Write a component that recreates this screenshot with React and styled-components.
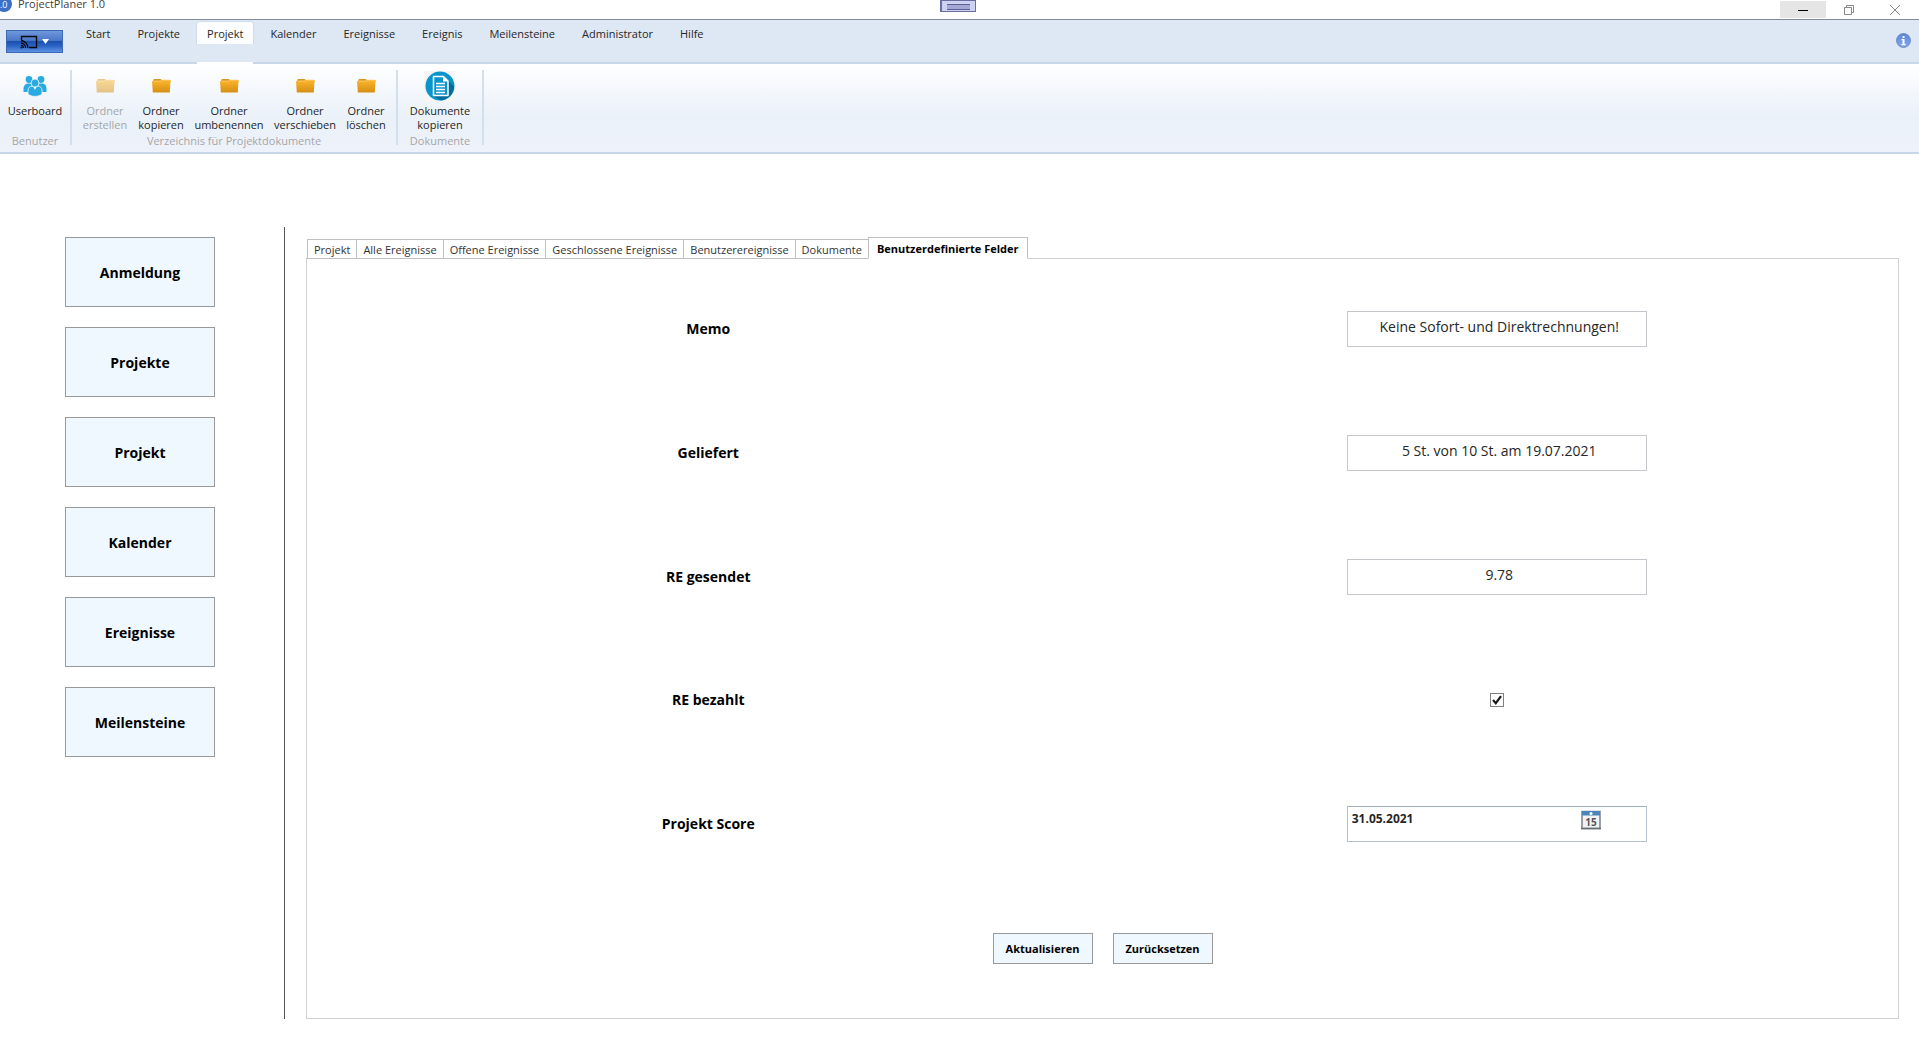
import React, { useState } from "react";
import styled, { createGlobalStyle } from "styled-components";

const GlobalStyle = createGlobalStyle`
  * {
    box-sizing: border-box;
  }

  html,
  body,
  #root {
    height: 100%;
  }

  body {
    margin: 0;
    background: #fff;
    color: #262626;
    font-family: "Open Sans", "Noto Sans", sans-serif;
    font-size: 11px;
    line-height: 14px;
  }

  button,
  input {
    margin: 0;
    font-family: inherit;
    color: inherit;
  }
`;

const Window = styled.div`
  min-height: 100%;
  display: flex;
  flex-direction: column;
`;

const TitleBar = styled.header`
  position: relative;
  display: flex;
  height: 20px;
  padding: 1px 1px 0 0;
  overflow: hidden;
  border-bottom: 1px solid #858a9c;
`;

const Caption = styled.div`
  display: flex;
  flex: 1;
  align-items: center;
  gap: 6px;
  height: 20px;
  margin-top: -7px;
  color: #404040;
`;

const AppLogo = styled.svg`
  width: 12px;
  height: 16px;
`;

const DockHandle = styled.div`
  position: absolute;
  top: 0;
  left: 49%;
  width: 36px;
  height: 12px;
  padding: 3px 5px;
  border: 1px solid #6a6da0;
  border-left-width: 2px;
  background: #ccd2f0;

  &::before {
    content: "";
    display: block;
    height: 4px;
    border-top: 1px solid #5c6096;
    border-bottom: 1px solid #5c6096;
    background: #a4a9d4;
  }
`;

const WindowButton = styled.button`
  display: flex;
  align-items: center;
  justify-content: center;
  width: 46px;
  height: 17px;
  padding: 0;
  border: 0;
  background: ${props => (props.$active ? "#e5e5e5" : "transparent")};
`;

const TabStrip = styled.nav`
  display: flex;
  align-items: flex-start;
  height: 44px;
  padding: 1px 8px 0 6px;
  border-bottom: 2px solid #c9d8e8;
  background: #dee8f5;
`;

const AppButton = styled.button`
  display: flex;
  align-items: center;
  justify-content: center;
  gap: 4px;
  width: 57px;
  height: 23px;
  margin: 9px 12px 0 0;
  padding: 0;
  border: 1px solid #3c68b4;
  background: linear-gradient(#6f98dc 0%, #4a78c8 45%, #1c50b0 50%, #2a62c4 70%, #5d92e2 100%);
`;

const RibbonTab = styled.button`
  position: relative;
  height: 23px;
  padding: 0 10px;
  margin-right: 5px;
  border: 1px solid ${props => (props.$active ? "#cfdcec" : "transparent")};
  border-bottom: 0;
  border-radius: 3px 3px 0 0;
  background: ${props => (props.$active ? "#fbfdff" : "transparent")};
  font-size: 11px;
  line-height: 24px;

  &::after {
    content: "";
    display: ${props => (props.$active ? "block" : "none")};
    position: absolute;
    top: 40px;
    left: 0;
    right: 0;
    height: 2px;
    background: #fff;
  }
`;

const InfoLink = styled.a`
  display: flex;
  margin: 12px 0 0 auto;
`;

const Ribbon = styled.div`
  display: flex;
  height: 90px;
  padding: 6px 0 7px;
  border-bottom: 2px solid #c9d8e8;
  background: linear-gradient(#ffffff 0%, #f6f9fd 25%, #eaf1f8 60%, #eef2fb 100%);
`;

const Group = styled.section`
  display: flex;
  flex-direction: column;
  align-items: center;
  padding: 0 5px;
  border-right: 2px solid #d3dfec;
`;

const GroupItems = styled.div`
  display: flex;
  flex: 1;
`;

const GroupName = styled.div`
  color: #a6a6a6;
  line-height: 8px;
`;

const RibbonButton = styled.button`
  display: flex;
  flex-direction: column;
  align-items: center;
  width: ${props => props.$width};
  padding: 0;
  border: 0;
  background: transparent;
  font-size: 11px;
  line-height: 14px;

  &:disabled {
    color: #a6a6a6;
  }

  &:disabled svg {
    opacity: 0.5;
  }

  svg {
    height: 32px;
    margin-bottom: 2px;
  }
`;

const Workspace = styled.div`
  display: flex;
  flex: 1;
  padding: 73px 20px 19px 0;
`;

const Sidebar = styled.aside`
  display: flex;
  flex-direction: column;
  gap: 20px;
  width: 285px;
  padding: 10px 69px 0 65px;
  border-right: 1px solid #555;
`;

const SideButton = styled.button`
  height: 70px;
  border: 1px solid #999;
  background: #f0f8ff;
  color: #000;
  font-size: 14px;
  font-weight: 700;
`;

const Main = styled.main`
  display: flex;
  flex: 1;
  flex-direction: column;
  padding: 10px 0 0 21px;
`;

const Tabs = styled.div`
  display: flex;
  align-items: flex-end;
  padding-left: 1px;
  margin-bottom: -1px;
`;

const Tab = styled.button`
  position: relative;
  height: ${props => (props.$active ? "22px" : "20px")};
  padding: ${props => (props.$active ? "0 8px" : "0 6px")};
  border: 1px solid #c0c0c0;
  border-bottom-color: ${props => (props.$active ? "#fff" : "#c0c0c0")};
  border-right-width: ${props => (props.$active ? "1px" : "0")};
  background: #fff;
  color: ${props => (props.$active ? "#000" : "#333")};
  font-size: 11px;
  font-weight: ${props => (props.$active ? 700 : 400)};
`;

const Panel = styled.form`
  display: flex;
  flex: 1;
  flex-direction: column;
  padding: 8px 7px;
  border: 1px solid #d0d0d0;
`;

const Row = styled.div`
  display: flex;
  flex: 1;
  align-items: center;
`;

const LabelCell = styled.label`
  flex: 1;
  color: #000;
  font-size: 14px;
  font-weight: 700;
  text-align: center;
`;

const FieldCell = styled.div`
  display: flex;
  flex: 1;
  justify-content: center;
`;

const TextInput = styled.input`
  width: 300px;
  height: 36px;
  padding: 0 0 4px 5px;
  border: 1px solid #c6c6cc;
  background: #fff;
  font-size: 14px;
  text-align: center;
`;

const CheckInput = styled.input`
  appearance: none;
  width: 14px;
  height: 14px;
  border: 1px solid #808080;
  background: #fff;
`;

const CheckBox = styled.span`
  position: relative;
  display: flex;

  svg {
    position: absolute;
    inset: 0;
    pointer-events: none;
  }
`;

const DateBox = styled.div`
  display: flex;
  align-items: flex-start;
  width: 300px;
  height: 36px;
  padding: 3px 45px 0 4px;
  border: 1px solid #b4c0cc;
  border-top-color: #9fb0c0;
`;

const DateInput = styled.input`
  flex: 1;
  min-width: 0;
  height: 16px;
  padding: 0;
  border: 0;
  background: transparent;
  font-size: 12px;
  font-weight: 700;
`;

const IconButton = styled.button`
  display: flex;
  padding: 0;
  border: 0;
  background: transparent;
`;

const Actions = styled.div`
  display: flex;
  flex: 1;
  align-items: center;
  justify-content: center;
  gap: 20px;
`;

const ActionButton = styled.button`
  width: 100px;
  height: 31px;
  padding: 0;
  border: 1px solid #999;
  background: #f0f8ff;
  color: #000;
  font-size: 11px;
  font-weight: 700;
`;

const CastIcon = () => (
  <svg width="18" height="14" viewBox="0 0 18 14" fill="none" stroke="#0a0a0a">
    <path d="M1.5 5V1.5h15v11H9" strokeWidth="1.4" />
    <path d="M1 5.5a7.5 7.5 0 0 1 7 7.5M1 8a5 5 0 0 1 4.6 5M1 10.4A2.6 2.6 0 0 1 3.4 13" strokeWidth="1.3" />
    <circle cx="1.4" cy="12.6" r="0.9" fill="#0a0a0a" stroke="none" />
  </svg>
);

const UsersIcon = () => (
  <svg width="32" viewBox="0 0 32 32" fill="#29abe2">
    <circle cx="10" cy="9.5" r="3.4" />
    <circle cx="22" cy="9.5" r="3.4" />
    <path d="M4.5 22v-3.5c0-3 2-5 4.6-5h2.4c1.2 0 2.4.6 2.8 1.4L11 22z" />
    <path d="M27.5 22v-3.5c0-3-2-5-4.6-5h-2.4c-1.2 0-2.4.6-2.8 1.4L21 22z" />
    <g stroke="#f6f9fc" strokeWidth="0.8">
      <path d="M9 24v-3.5c0-3 2-4.5 4.5-4.5h5c2.500 0 4.500 1.500 4.500 4.500V24c-1.500 1.500-4 2.400-7 2.400S10.500 25.500 9 24z" />
      <circle cx="16" cy="13" r="4" />
    </g>
    <path d="M14.5 17h3L16 20z" fill="#f6f9fc" />
  </svg>
);

const FolderIcon = () => (
  <svg width="32" viewBox="0 0 32 32">
    <defs>
      <linearGradient id="folder" x1="0" y1="0" x2="0" y2="1">
        <stop offset="0" stopColor="#fdb62b" />
        <stop offset="1" stopColor="#d48f14" />
      </linearGradient>
    </defs>
    <path d="M8 10.5q0-1.500 1.500-1.500h6l1.500 1h7.500q1 0 1 1V12H8z" fill="#d9951c" />
    <path d="M7 11h9l1.500-1H25.500l-.7 12.600H7.800z" fill="url(#folder)" />
    <path d="M8 11h8l1.500-1H25" fill="none" stroke="#ffd98a" strokeWidth="0.7" />
  </svg>
);

const DocumentIcon = () => (
  <svg width="32" viewBox="0 0 32 32">
    <path d="M0 1h31v31H0z" fill="#f5f5f5" />
    <circle cx="16" cy="16" r="14.5" fill="#0a94cc" />
    <path d="M20 6l10 10.500A14.500 14.500 0 0 1 17 30.400L9 26h15z" fill="#056d9c" />
    <path d="M9.500 6.500h10l4.500 4.500v14.500H9.500z" fill="#0a94cc" stroke="#fff" strokeWidth="1.5" strokeLinejoin="round" />
    <path d="M19 6v5.500h5.500z" fill="#fff" />
    <path d="M12 13.500h9M12 16.500h9M12 19.500h9M12 22.500h9" stroke="#fff" strokeWidth="1.5" />
  </svg>
);

const InfoIcon = () => (
  <svg width="15" height="15" viewBox="0 0 15 15">
    <defs>
      <linearGradient id="info" x1="0" y1="0" x2="0" y2="1">
        <stop offset="0" stopColor="#5c86d8" />
        <stop offset="1" stopColor="#86aaf0" />
      </linearGradient>
    </defs>
    <circle cx="7.5" cy="7.5" r="6.9" fill="url(#info)" stroke="#6684c8" />
    <path d="M6.500 3h2v2h-2zM5.500 6h3v5h1v1.200h-4V11h1V7.200h-1z" fill="#fff" />
  </svg>
);

const CalendarIcon = () => (
  <svg width="20" height="20" viewBox="0 0 20 20">
    <path d="M1 1.500h18v17H1z" fill="#f1f2f4" stroke="#7c828a" strokeWidth="1.5" />
    <path d="M1 1h18v4.500H1z" fill="#4a86bd" />
    <circle cx="10" cy="3.5" r="1.5" fill="#fff" />
    <path d="M0 18.500h20" stroke="#666c74" strokeWidth="1.5" />
    <text x="10" y="16" textAnchor="middle" fontSize="10" fontWeight="700" fill="#555" fontFamily="Open Sans, sans-serif">
      15
    </text>
  </svg>
);

const ribbonTabs = [
  "Start",
  "Projekte",
  "Projekt",
  "Kalender",
  "Ereignisse",
  "Ereignis",
  "Meilensteine",
  "Administrator",
  "Hilfe"
];

const folderActions = [
  { verb: "erstellen", width: "56px", disabled: true },
  { verb: "kopieren", width: "56px" },
  { verb: "umbenennen", width: "80px" },
  { verb: "verschieben", width: "72px" },
  { verb: "löschen", width: "50px" }
];

const sideItems = ["Anmeldung", "Projekte", "Projekt", "Kalender", "Ereignisse", "Meilensteine"];

const panelTabs = [
  "Projekt",
  "Alle Ereignisse",
  "Offene Ereignisse",
  "Geschlossene Ereignisse",
  "Benutzerereignisse",
  "Dokumente",
  "Benutzerdefinierte Felder"
];

const initialFields = {
  memo: "Keine Sofort- und Direktrechnungen!",
  geliefert: "5 St. von 10 St. am 19.07.2021",
  gesendet: "9.78",
  bezahlt: true,
  score: "31.05.2021"
};

const textFields = [
  { name: "memo", label: "Memo" },
  { name: "geliefert", label: "Geliefert" },
  { name: "gesendet", label: "RE gesendet" }
];

function App() {
  const [ribbonTab, setRibbonTab] = useState("Projekt");
  const [panelTab, setPanelTab] = useState("Benutzerdefinierte Felder");
  const [fields, setFields] = useState(initialFields);

  const handleChange = e => {
    const { name, type, checked, value } = e.target;
    setFields({ ...fields, [name]: type === "checkbox" ? checked : value });
  };

  return (
    <Window>
      <GlobalStyle />
      <TitleBar>
        <Caption>
          <AppLogo viewBox="0 0 12 16">
            <circle cx="4" cy="8" r="8" fill="#3c6fc8" />
            <text x="0" y="12" fontSize="9" fill="#fff">.0</text>
          </AppLogo>
          ProjectPlaner 1.0
        </Caption>
        <DockHandle />
        <WindowButton $active aria-label="Minimieren">
          <svg width="10" height="10" stroke="#000">
            <path d="M0 5.5h10" />
          </svg>
        </WindowButton>
        <WindowButton aria-label="Verkleinern">
          <svg width="10" height="10" fill="none" stroke="#888">
            <path d="M.5 2.5h7v7h-7zM2.5 2.5v-2h7v7h-2" />
          </svg>
        </WindowButton>
        <WindowButton aria-label="Schließen">
          <svg width="10" height="10" stroke="#888">
            <path d="M0 0l10 10M10 0L0 10" />
          </svg>
        </WindowButton>
      </TitleBar>

      <TabStrip>
        <AppButton aria-label="Menü">
          <CastIcon />
          <svg width="7" height="5" fill="#fff">
            <path d="M0 0h7L3.500 5z" />
          </svg>
        </AppButton>
        {ribbonTabs.map(tab => (
          <RibbonTab key={tab} $active={tab === ribbonTab} onClick={() => setRibbonTab(tab)}>
            {tab}
          </RibbonTab>
        ))}
        <InfoLink href="#info" aria-label="Info">
          <InfoIcon />
        </InfoLink>
      </TabStrip>

      <Ribbon>
        <Group>
          <GroupItems>
            <RibbonButton $width="60px">
              <UsersIcon />
              Userboard
            </RibbonButton>
          </GroupItems>
          <GroupName>Benutzer</GroupName>
        </Group>
        <Group>
          <GroupItems>
            {folderActions.map(({ verb, width, disabled }) => (
              <RibbonButton key={verb} $width={width} disabled={disabled}>
                <FolderIcon />
                <span>Ordner</span>
                <span>{verb}</span>
              </RibbonButton>
            ))}
          </GroupItems>
          <GroupName>Verzeichnis für Projektdokumente</GroupName>
        </Group>
        <Group>
          <GroupItems>
            <RibbonButton $width="74px">
              <DocumentIcon />
              <span>Dokumente</span>
              <span>kopieren</span>
            </RibbonButton>
          </GroupItems>
          <GroupName>Dokumente</GroupName>
        </Group>
      </Ribbon>

      <Workspace>
        <Sidebar>
          {sideItems.map(item => (
            <SideButton key={item}>{item}</SideButton>
          ))}
        </Sidebar>
        <Main>
          <Tabs role="tablist">
            {panelTabs.map(tab => (
              <Tab
                key={tab}
                role="tab"
                aria-selected={tab === panelTab}
                $active={tab === panelTab}
                onClick={() => setPanelTab(tab)}
              >
                {tab}
              </Tab>
            ))}
          </Tabs>
          <Panel onSubmit={e => e.preventDefault()}>
            {textFields.map(({ name, label }) => (
              <Row key={name}>
                <LabelCell htmlFor={name}>{label}</LabelCell>
                <FieldCell>
                  <TextInput id={name} name={name} value={fields[name]} onChange={handleChange} />
                </FieldCell>
              </Row>
            ))}
            <Row>
              <LabelCell htmlFor="bezahlt">RE bezahlt</LabelCell>
              <FieldCell>
                <CheckBox>
                  <CheckInput
                    type="checkbox"
                    id="bezahlt"
                    name="bezahlt"
                    checked={fields.bezahlt}
                    onChange={handleChange}
                  />
                  {fields.bezahlt && (
                    <svg width="14" height="14" fill="none" stroke="#1a1a1a" strokeWidth="2.2">
                      <path d="M3 7l2.800 3.200L11 3.200" />
                    </svg>
                  )}
                </CheckBox>
              </FieldCell>
            </Row>
            <Row>
              <LabelCell htmlFor="score">Projekt Score</LabelCell>
              <FieldCell>
                <DateBox>
                  <DateInput id="score" name="score" value={fields.score} onChange={handleChange} />
                  <IconButton type="button" aria-label="Kalender öffnen">
                    <CalendarIcon />
                  </IconButton>
                </DateBox>
              </FieldCell>
            </Row>
            <Actions>
              <ActionButton type="submit">Aktualisieren</ActionButton>
              <ActionButton type="button" onClick={() => setFields(initialFields)}>
                Zurücksetzen
              </ActionButton>
            </Actions>
          </Panel>
        </Main>
      </Workspace>
    </Window>
  );
}

export default App;
